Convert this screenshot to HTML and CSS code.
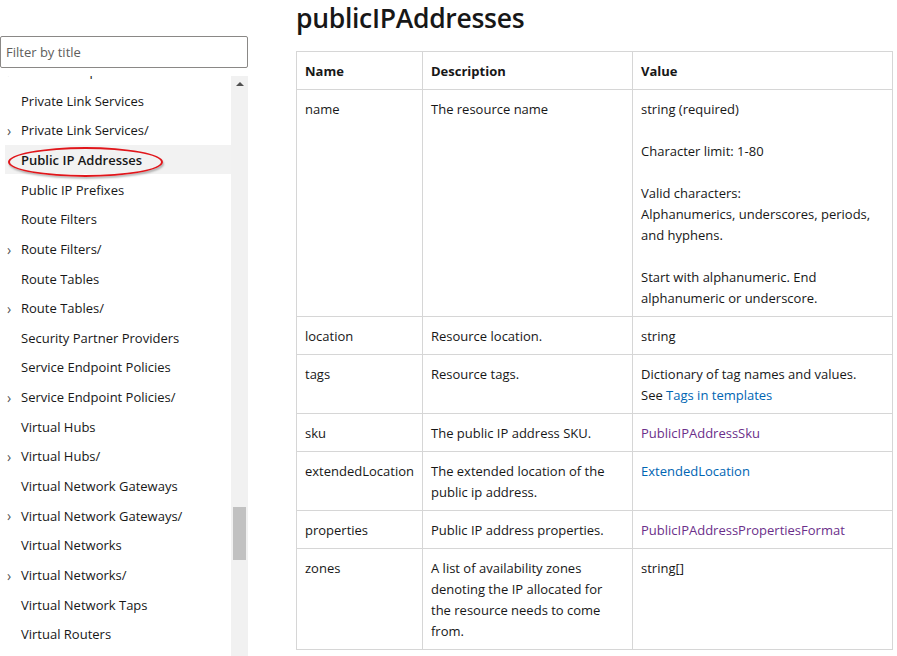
FILE: index.html
```html
<!DOCTYPE html>
<html lang="en">
<head>
<meta charset="utf-8">
<title>publicIPAddresses</title>
<link rel="stylesheet" href="styles.css">
</head>
<body>
<div class="page">
  <aside class="sidebar">
    <div class="filter"><span class="placeholder">Filter by title</span></div>
    <div class="toc">
      <ul class="items">
        <li class="item partial"><span class="chev">›</span>Private Endpoints/</li>
        <li class="item">Private Link Services</li>
        <li class="item"><span class="chev">›</span>Private Link Services/</li>
        <li class="item selected">Public IP Addresses<span class="circle"></span></li>
        <li class="item">Public IP Prefixes</li>
        <li class="item">Route Filters</li>
        <li class="item"><span class="chev">›</span>Route Filters/</li>
        <li class="item">Route Tables</li>
        <li class="item"><span class="chev">›</span>Route Tables/</li>
        <li class="item">Security Partner Providers</li>
        <li class="item">Service Endpoint Policies</li>
        <li class="item"><span class="chev">›</span>Service Endpoint Policies/</li>
        <li class="item">Virtual Hubs</li>
        <li class="item"><span class="chev">›</span>Virtual Hubs/</li>
        <li class="item">Virtual Network Gateways</li>
        <li class="item"><span class="chev">›</span>Virtual Network Gateways/</li>
        <li class="item">Virtual Networks</li>
        <li class="item"><span class="chev">›</span>Virtual Networks/</li>
        <li class="item">Virtual Network Taps</li>
        <li class="item">Virtual Routers</li>
      </ul>
      <div class="scrollbar">
        <div class="arrow"></div>
        <div class="thumb"></div>
      </div>
    </div>
  </aside>
  <main class="content">
    <h1>publicIPAddresses</h1>
    <table class="props">
      <thead>
        <tr><th class="c1">Name</th><th class="c2">Description</th><th class="c3">Value</th></tr>
      </thead>
      <tbody>
        <tr>
          <td>name</td>
          <td>The resource name</td>
          <td>string (required)<br><br>Character limit: 1-80<br><br>Valid characters:<br>Alphanumerics, underscores, periods, and hyphens.<br><br>Start with alphanumeric. End alphanumeric or underscore.</td>
        </tr>
        <tr>
          <td>location</td>
          <td>Resource location.</td>
          <td>string</td>
        </tr>
        <tr>
          <td>tags</td>
          <td>Resource tags.</td>
          <td>Dictionary of tag names and values.<br>See <a class="link" href="#">Tags in templates</a></td>
        </tr>
        <tr>
          <td>sku</td>
          <td>The public IP address SKU.</td>
          <td><a class="visited" href="#">PublicIPAddressSku</a></td>
        </tr>
        <tr>
          <td>extendedLocation</td>
          <td>The extended location of the public ip address.</td>
          <td><a class="link" href="#">ExtendedLocation</a></td>
        </tr>
        <tr>
          <td>properties</td>
          <td>Public IP address properties.</td>
          <td><a class="visited" href="#">PublicIPAddressPropertiesFormat</a></td>
        </tr>
        <tr>
          <td>zones</td>
          <td>A list of availability zones denoting the IP allocated for the resource needs to come from.</td>
          <td>string[]</td>
        </tr>
      </tbody>
    </table>
  </main>
</div>
</body>
</html>
```

FILE: styles.css
```css
* { box-sizing: border-box; }
html, body { margin: 0; padding: 0; background: #fff; }
body {
  font-family: "Open Sans", "Noto Sans", sans-serif;
  color: #171717;
  overflow: hidden;
  height: 656px;
}
.page {
  display: flex;
  gap: 48px;
  height: 656px;
}
.sidebar {
  width: 248px;
  flex: none;
  padding-top: 36px;
  display: flex;
  flex-direction: column;
}
.filter {
  height: 32px;
  border: 1px solid #8a8886;
  border-radius: 2px;
  padding: 0 5px;
  display: flex;
  align-items: center;
  font-size: 13px;
  color: #605e5c;
}
.toc {
  margin-top: 8px;
  flex: 1;
  display: flex;
  overflow: hidden;
}
.items {
  list-style: none;
  margin: 0;
  padding: 0;
  width: 231px;
  flex: none;
  font-size: 13px;
}
.item {
  position: relative;
  height: 29.65px;
  display: flex;
  align-items: center;
  padding-left: 21px;
  padding-top: 1px;
  white-space: nowrap;
  color: #171717;
}
.item.partial { margin-top: -20.3px; }
.item.selected {
  background: #f2f2f2;
  margin-left: 5px;
  padding-left: 16px;
  font-weight: 600;
}
.chev {
  position: absolute;
  left: 7px;
  top: 6px;
  font-size: 14px;
  color: #555;
}
.circle {
  position: absolute;
  left: 3px;
  top: 2px;
  width: 155px;
  height: 30px;
  border: 2px solid #e0161b;
  border-radius: 50%;
  box-shadow: 1px 2px 2px rgba(0,0,0,0.25);
}
.scrollbar {
  width: 17px;
  flex: none;
  background: #f1f1f1;
  position: relative;
}
.arrow {
  position: absolute;
  left: 5px;
  top: 6px;
  width: 0;
  height: 0;
  border-left: 4px solid transparent;
  border-right: 4px solid transparent;
  border-bottom: 4px solid #505050;
}
.thumb {
  position: absolute;
  left: 2px;
  top: 431px;
  width: 13px;
  height: 53px;
  background: #c1c1c1;
}
.content {
  width: 597px;
  flex: none;
}
h1 {
  margin: 0;
  height: 51px;
  font-size: 26.5px;
  font-weight: 600;
  line-height: 36px;
  letter-spacing: -0.3px;
}
.props {
  border-collapse: collapse;
  width: 597px;
  font-size: 13px;
  line-height: 21px;
  table-layout: fixed;
}
.props th, .props td {
  border: 1px solid #d6d6d6;
  text-align: left;
  vertical-align: top;
  padding: 9px 8px 7px 8px;
}
.props th { font-weight: 700; }
.c1 { width: 126px; }
.c2 { width: 210px; }
.props a { text-decoration: none; }
.link { color: #0065b3; }
.visited { color: #6b2f8a; }
```
